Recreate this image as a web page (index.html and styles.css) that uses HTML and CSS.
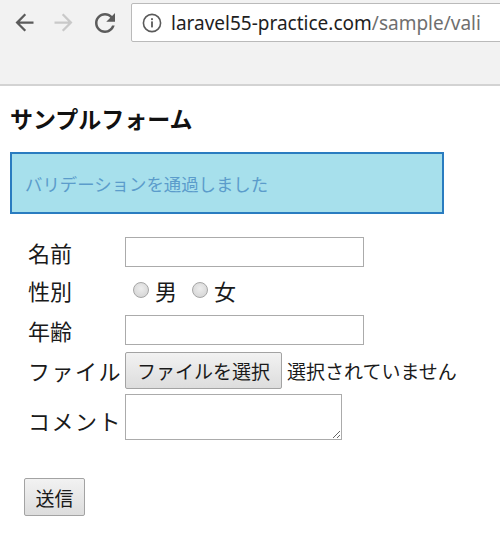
FILE: index.html
```html
<!DOCTYPE html>
<html lang="ja">
<head>
<meta charset="utf-8">
<title>サンプルフォーム</title>
<link rel="stylesheet" href="styles.css">
</head>
<body>
<div class="chrome">
  <div class="toolbar">
    <svg class="nav back" viewBox="0 0 24 24"><path d="M20 11H7.83l5.59-5.59L12 4l-8 8 8 8 1.41-1.41L7.83 13H20v-2z"/></svg>
    <svg class="nav fwd" viewBox="0 0 24 24"><path d="M4 11h12.17l-5.59-5.59L12 4l8 8-8 8-1.41-1.41L16.17 13H4v-2z"/></svg>
    <svg class="nav reload" viewBox="0 0 24 24"><path d="M17.65 6.35C16.2 4.9 14.21 4 12 4c-4.42 0-7.99 3.58-7.99 8s3.57 8 7.99 8c3.73 0 6.84-2.55 7.73-6h-2.08c-.82 2.330-3.04 4-5.65 4-3.310 0-6-2.69-6-6s2.690-6 6-6c1.66 0 3.14.69 4.22 1.78L13 11h7V4l-2.35 2.35z"/></svg>
    <div class="omnibox">
      <svg class="info" viewBox="0 0 20 20"><circle cx="10" cy="10" r="8.6" fill="none" stroke="#5a5a5a" stroke-width="1.6"/><rect x="9.1" y="8.4" width="1.8" height="6" fill="#5a5a5a"/><rect x="9.1" y="5.2" width="1.8" height="1.9" fill="#5a5a5a"/></svg>
      <span class="url"><span class="host">laravel55-practice.com</span><span class="path">/sample/vali</span></span>
    </div>
  </div>
</div>
<main class="page">
  <h1 class="title">サンプルフォーム</h1>
  <div class="alert">バリデーションを通過しました</div>
  <form class="form" action="#" onsubmit="return false;">
    <div class="fields">
      <label class="lbl" for="name">名前</label>
      <div class="ctl"><input class="text" id="name" type="text"></div>

      <span class="lbl">性別</span>
      <div class="ctl radios">
        <label class="opt opt-first"><input class="radio" type="radio" name="sex">男</label>
        <label class="opt"><input class="radio" type="radio" name="sex">女</label>
      </div>

      <label class="lbl" for="age">年齢</label>
      <div class="ctl"><input class="text" id="age" type="text"></div>

      <span class="lbl lbl-wide">ファイル</span>
      <div class="ctl file">
        <button class="btn filebtn" type="button">ファイルを選択</button>
        <span class="nofile">選択されていません</span>
      </div>

      <label class="lbl lbl-wide lbl-comment" for="comment">コメント</label>
      <div class="ctl"><textarea class="area" id="comment"></textarea></div>
    </div>
    <button class="btn submit" type="submit">送信</button>
  </form>
</main>
</body>
</html>
```
FILE: styles.css
```css
* { box-sizing: border-box; }

html, body {
  margin: 0;
  padding: 0;
  background: #ffffff;
}

body {
  font-family: "Noto Sans CJK JP", "Noto Sans", sans-serif;
  color: #1a1a1a;
  width: 500px;
  overflow: hidden;
}

/* browser chrome */
.chrome {
  height: 86px;
  background: #f2f2f2;
  border-bottom: 2px solid #d3d3d3;
  overflow: hidden;
}

.toolbar {
  height: 45px;
  display: flex;
  align-items: center;
}

.nav {
  flex: none;
  fill: #5b5b5b;
}

.back {
  width: 27px;
  height: 27px;
  margin-left: 11px;
}

.fwd {
  width: 27px;
  height: 27px;
  margin-left: 12px;
  fill: #c9c9c9;
}

.reload {
  width: 30px;
  height: 30px;
  margin-left: 13px;
}

.omnibox {
  flex: none;
  width: 390px;
  height: 39px;
  margin-left: 11px;
  background: #ffffff;
  border: 1px solid #bababa;
  border-radius: 2px;
  display: flex;
  align-items: center;
  padding-left: 10px;
  white-space: nowrap;
}

.info {
  width: 20px;
  height: 20px;
  flex: none;
}

.url {
  margin-left: 9px;
  font-family: "Noto Sans", "Open Sans", sans-serif;
  font-size: 19px;
}

.host { color: #1e1e1e; }
.path { color: #6f6f6f; }

/* page */
.page {
  padding: 17px 10px 0 10px;
}

.title {
  margin: 0;
  font-size: 23px;
  line-height: 30px;
  font-weight: bold;
  color: #111111;
}

.alert {
  margin-top: 19px;
  width: 434px;
  height: 62px;
  background: #a7e0ec;
  border: 2px solid #2a7cc0;
  padding-left: 13px;
  display: flex;
  align-items: center;
  font-size: 17.4px;
  color: #5b9ccb;
}

.form {
  margin-top: 22px;
}

.fields {
  margin-left: 18px;
  display: grid;
  grid-template-columns: 97px auto;
  grid-template-rows: 32px 40px 36px 40px 50px;
  row-gap: 2px;
  align-items: center;
}

.lbl {
  font-size: 22px;
  line-height: 26px;
  white-space: nowrap;
  color: #1a1a1a;
}

.lbl-comment {
  padding-top: 6px;
}

.lbl-wide {
  letter-spacing: 1.5px;
}

.ctl {
  display: flex;
  align-items: center;
}

.text {
  width: 239px;
  height: 30px;
  border: 1px solid #ababab;
  padding: 2px 4px;
  font-size: 18px;
  background: #ffffff;
  margin: 0;
}

.radios {
  font-size: 22px;
}

.opt {
  display: flex;
  align-items: center;
  margin-left: 15px;
}

.opt-first {
  margin-left: 8px;
}

.radio {
  -webkit-appearance: none;
  appearance: none;
  flex: none;
  width: 16px;
  height: 16px;
  margin: 0 6px 0 0;
  border-radius: 50%;
  border: 1px solid #a6a6a6;
  background: radial-gradient(circle at 50% 40%, #ededed 0%, #d6d6d6 80%);
}

.btn {
  font-family: "Noto Sans CJK JP", sans-serif;
  color: #1a1a1a;
  border: 1px solid #a3a3a3;
  border-radius: 2px;
  background: linear-gradient(#f2f2f2, #dddddd);
  padding: 0;
  margin: 0;
}

.filebtn {
  width: 157px;
  height: 37px;
  font-size: 19px;
}

.nofile {
  margin-left: 5px;
  font-size: 19px;
  white-space: nowrap;
}

.area {
  width: 217px;
  height: 46px;
  border: 1px solid #ababab;
  margin: 0;
  resize: both;
}

.submit {
  display: block;
  margin-top: 36px;
  margin-left: 14px;
  width: 61px;
  height: 38px;
  font-size: 19px;
}
```
